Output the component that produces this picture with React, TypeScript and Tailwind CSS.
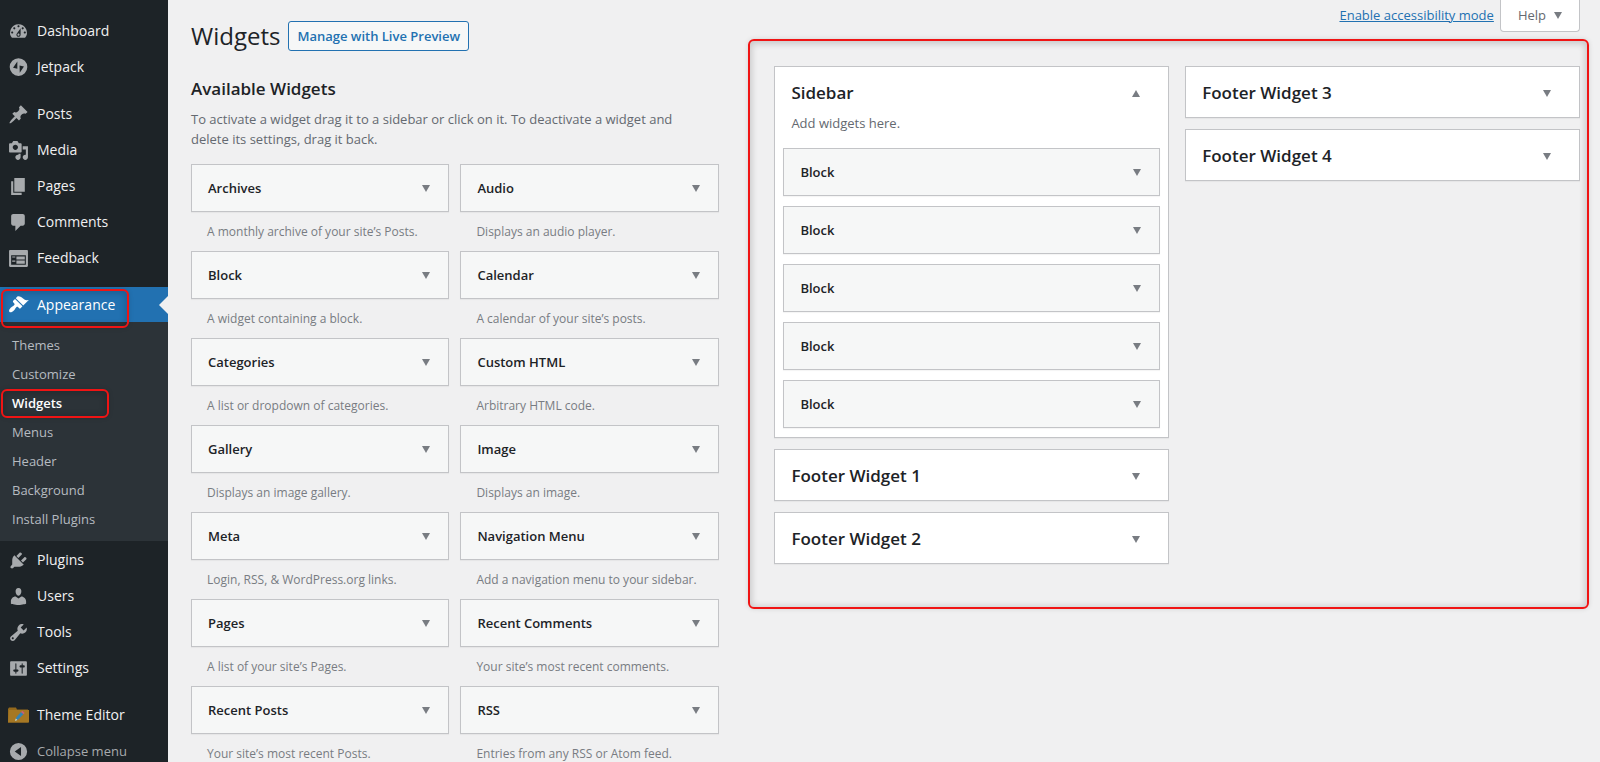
import { useState } from 'react';
import clsx from 'clsx';

interface MenuItem {
    label: string;
    icon: keyof typeof icons;
}

interface Widget {
    title: string;
    description: string;
}

const icons = {
    dashboard: 'M3.76 16h12.48A7.998 7.998 0 0 0 10 3a7.998 7.998 0 0 0-6.24 13zM10 4c.55 0 1 .45 1 1s-.45 1-1 1-1-.45-1-1 .45-1 1-1zM6 6c.55 0 1 .45 1 1s-.45 1-1 1-1-.45-1-1 .45-1 1-1zm8 0c.55 0 1 .45 1 1s-.45 1-1 1-1-.45-1-1 .45-1 1-1zm-5.37 5.55L12 7v6c0 1.1-.9 2-2 2s-2-.9-2-2c0-.57.24-1.08.63-1.45zM4 10c.55 0 1 .45 1 1s-.45 1-1 1-1-.45-1-1 .45-1 1-1zm12 0c.55 0 1 .45 1 1s-.45 1-1 1-1-.45-1-1 .45-1 1-1zm-5 3c0-.55-.45-1-1-1s-1 .45-1 1 .45 1 1 1 1-.45 1-1z',
    jetpack: 'M10 1.2a8.4 8.4 0 1 0 0 16.8 8.4 8.4 0 0 0 0-16.8zM8.9 4.400v6.900L4.800 10.200zM11 8l4.200 1.100L11.200 15z',
    post: 'M10.44 3.02l1.82-1.82 6.36 6.35-1.83 1.82c-1.05-.68-2.48-.57-3.41.36l-.75.75c-.92.93-1.04 2.35-.35 3.41l-1.83 1.82-2.41-2.41-2.8 2.79c-.42.42-3.38 2.71-3.8 2.29s1.86-3.39 2.28-3.81l2.79-2.79L4.1 9.36l1.83-1.82c1.05.69 2.48.57 3.4-.36l.75-.75c.93-.92 1.05-2.35.36-3.41z',
    media: 'M13 11V4c0-.55-.45-1-1-1h-1.67L9 1H5L3.67 3H2c-.55 0-1 .45-1 1v7c0 .55.45 1 1 1h10c.55 0 1-.45 1-1zM7 4.5c1.38 0 2.5 1.12 2.5 2.5S8.38 9.5 7 9.5 4.5 8.38 4.5 7 5.62 4.5 7 4.5zM14 6h5v10.5c0 1.38-1.12 2.5-2.5 2.5S14 17.88 14 16.5s1.12-2.5 2.5-2.5c.17 0 .34.02.5.05V9h-3V6zm-4 8.05V13h2v3.5c0 1.38-1.12 2.5-2.5 2.5S7 17.88 7 16.5 8.12 14 9.5 14c.17 0 .34.02.5.05z',
    page: 'M6 15V2h10v13H6zm-1 1h8v2H3V5h2v11z',
    comments: 'M5 2h9c1.1 0 2 .9 2 2v7c0 1.1-.9 2-2 2h-2l-5 5v-5H5c-1.1 0-2-.9-2-2V4c0-1.1.9-2 2-2z',
    feedback: 'M2 2h16c.55 0 1 .45 1 1v14c0 .55-.45 1-1 1H2c-.55 0-1-.45-1-1V3c0-.55.45-1 1-1zm15 14V7H3v9h14zM4 8v1h3V8H4zm4 0v3h8V8H8zm-4 4v1h3v-1H4zm4 0v3h8v-3H8z',
    appearance: 'M14.48 11.06L7.41 3.99l1.5-1.5c.5-.56 2.3-.47 3.51.32 1.21.8 1.43 1.28 2.91 2.1 1.18.64 2.45 1.26 4.45.85zm-.71.71L6.7 4.7 4.93 6.47c-.39.39-.39 1.02 0 1.41l1.06 1.06c.39.39.39 1.03 0 1.42-.6.6-1.43 1.11-2.21 1.69-.35.26-.7.53-1.01.84C1.43 14.23.4 16.08 1.4 17.07c.99 1 2.84-.03 4.18-1.36.31-.31.58-.66.85-1.02.57-.78 1.08-1.61 1.69-2.21.39-.39 1.02-.39 1.41 0l1.06 1.06c.39.39 1.02.39 1.41 0z',
    plugins: 'M13.11 4.36L9.87 7.6 8 5.73l3.24-3.24c.35-.34 1.05-.2 1.56.32.52.51.66 1.21.31 1.55zm-8 1.77l.91-1.12 9.01 9.01-1.19.84c-.71.71-2.63 1.16-3.82 1.16H6.14L4.9 17.26c-.59.59-1.54.59-2.12 0-.59-.58-.59-1.53 0-2.12l1.24-1.24v-3.88c0-1.13.4-3.19 1.09-3.89zm7.26 3.97l3.24-3.24c.34-.35 1.04-.21 1.55.31.52.51.66 1.21.31 1.55l-3.24 3.25z',
    users: 'M10 9.25c-2.27 0-2.73-3.44-2.73-3.44C7 4.02 7.82 2 9.97 2c2.16 0 2.98 2.02 2.71 3.81 0 0-.41 3.44-2.68 3.44zm0 2.57L12.72 10c2.39 0 4.52 2.33 4.52 4.53v2.49s-3.65 1.13-7.24 1.13c-3.65 0-7.24-1.13-7.24-1.13v-2.49c0-2.25 1.94-4.48 4.47-4.48z',
    tools: 'M16.68 9.77c-1.34 1.34-3.3 1.67-4.95.99l-5.41 6.52c-.99.99-2.59.99-3.58 0s-.99-2.59 0-3.57l6.52-5.42c-.68-1.65-.35-3.61.99-4.95 1.28-1.28 3.12-1.62 4.72-1.06l-2.89 2.89 2.82 2.82 2.86-2.87c.53 1.58.18 3.39-1.08 4.65zM3.81 16.21c.4.39 1.04.39 1.43 0 .4-.4.4-1.04 0-1.43-.39-.4-1.03-.4-1.43 0-.39.39-.39 1.03 0 1.43z',
    settings: 'M18 16V4c0-.55-.45-1-1-1H3c-.55 0-1 .45-1 1v12c0 .55.45 1 1 1h14c.55 0 1-.45 1-1zM8 11h1c.55 0 1 .45 1 1s-.45 1-1 1H8v1.5c0 .28-.22.5-.5.5s-.5-.22-.5-.5V13H6c-.55 0-1-.45-1-1s.45-1 1-1h1V5.5c0-.28.22-.5.5-.5s.5.22.5.5V11zm5-2h-1c-.55 0-1-.45-1-1s.45-1 1-1h1V5.5c0-.28.22-.5.5-.5s.5.22.5.5V7h1c.55 0 1 .45 1 1s-.45 1-1 1h-1v5.5c0 .28-.22.5-.5.5s-.5-.22-.5-.5V9z',
    collapse: 'M10 1.8a8.2 8.2 0 1 0 0 16.4 8.2 8.2 0 0 0 0-16.4zM12.4 5.8v8.4L6.4 10z',
};

const topItems: MenuItem[] = [
    { label: 'Dashboard', icon: 'dashboard' },
    { label: 'Jetpack', icon: 'jetpack' },
];

const contentItems: MenuItem[] = [
    { label: 'Posts', icon: 'post' },
    { label: 'Media', icon: 'media' },
    { label: 'Pages', icon: 'page' },
    { label: 'Comments', icon: 'comments' },
    { label: 'Feedback', icon: 'feedback' },
];

const adminItems: MenuItem[] = [
    { label: 'Plugins', icon: 'plugins' },
    { label: 'Users', icon: 'users' },
    { label: 'Tools', icon: 'tools' },
    { label: 'Settings', icon: 'settings' },
];

const submenu = ['Themes', 'Customize', 'Widgets', 'Menus', 'Header', 'Background', 'Install Plugins'];

const widgets: Widget[] = [
    { title: 'Archives', description: 'A monthly archive of your site’s Posts.' },
    { title: 'Audio', description: 'Displays an audio player.' },
    { title: 'Block', description: 'A widget containing a block.' },
    { title: 'Calendar', description: 'A calendar of your site’s posts.' },
    { title: 'Categories', description: 'A list or dropdown of categories.' },
    { title: 'Custom HTML', description: 'Arbitrary HTML code.' },
    { title: 'Gallery', description: 'Displays an image gallery.' },
    { title: 'Image', description: 'Displays an image.' },
    { title: 'Meta', description: 'Login, RSS, & WordPress.org links.' },
    { title: 'Navigation Menu', description: 'Add a navigation menu to your sidebar.' },
    { title: 'Pages', description: 'A list of your site’s Pages.' },
    { title: 'Recent Comments', description: 'Your site’s most recent comments.' },
    { title: 'Recent Posts', description: 'Your site’s most recent Posts.' },
    { title: 'RSS', description: 'Entries from any RSS or Atom feed.' },
];

const Icon = ({ name }: { name: keyof typeof icons }) => (
    <svg viewBox="0 0 20 20" className="size-[21px] shrink-0" fill="currentColor" fillRule="evenodd" aria-hidden="true">
        <path d={icons[name]} />
    </svg>
);

const FolderIcon = () => (
    <svg viewBox="0 0 21 21" className="size-[21px] shrink-0" aria-hidden="true">
        <path d="M1 2.500h7l1 2h11v13H0V4z" fill="#94691c" />
        <path d="M1 5h20v12.500H0z" fill="#a67824" />
        <path d="M7 16l1.500-4 4.500-5 2.500 2.300-5 5z" fill="#3583b5" />
        <path d="M13 7l1.300-1.300 2.400 2.200-1.200 1.400z" fill="#c95f78" />
        <path d="M7 16l.8-2.400 1.600 1.500z" fill="#e8d9b5" />
    </svg>
);

const Arrow = ({ up }: { up?: boolean }) => (
    <svg viewBox="0 0 8 7" className={clsx('w-2 h-[7px] shrink-0', up && 'rotate-180')} fill="#787c82" aria-hidden="true">
        <path d="M0 0h8L4 7z" />
    </svg>
);

const MenuLink = ({ item }: { item: MenuItem }) => (
    <li>
        <a href="#" className="flex h-9 items-center gap-2 px-2 pt-0.5 text-[#f0f0f1] hover:text-[#72aee6]">
            <span className="text-[#a7aaad]"><Icon name={item.icon} /></span>
            {item.label}
        </a>
    </li>
);

// One draggable widget bar
const WidgetBar = ({ title }: { title: string }) => (
    <button className="flex h-12 w-full items-center justify-between border border-[#c3c4c7] bg-[#f6f7f7] pl-4 pr-[18px] text-left text-[13px] font-semibold text-[#1d2327] shadow-[0_1px_1px_rgba(0,0,0,0.04)]">
        <span className="pt-0.5">{title}</span>
        <Arrow />
    </button>
);

const AreaPanel = ({ title, description, blocks = [] }: { title: string; description?: string; blocks?: string[] }) => {
    const [open, setOpen] = useState(blocks.length > 0);

    return (
        <section className="border border-[#c3c4c7] bg-white shadow-[0_1px_1px_rgba(0,0,0,0.04)]">
            <h2>
                <button
                    className="flex h-[50px] w-full items-center justify-between pl-4 pr-7 pt-0.5 text-left text-[17px] font-semibold text-[#1d2327]"
                    onClick={() => setOpen(!open)}
                    aria-expanded={open}
                >
                    {title}
                    <Arrow up={open} />
                </button>
            </h2>
            {open && (
                <div className="px-2 pb-[9px]">
                    <p className="-mt-0.5 mb-[17px] px-2 text-[13px] leading-4 text-[#646970]">{description}</p>
                    <div className="flex flex-col gap-[10px]">
                        {blocks.map((block, i) => (
                            <WidgetBar key={i} title={block} />
                        ))}
                    </div>
                </div>
            )}
        </section>
    );
};

const Marker = ({ className }: { className: string }) => (
    <span
        className={clsx(
            'pointer-events-none absolute rounded-md border-2 border-[#f01414] shadow-[inset_0_1px_6px_2px_rgba(0,0,0,0.16),0_0_5px_rgba(0,0,0,0.12)]',
            className
        )}
    />
);

const AdminMenu = () => (
    <nav className="w-[168px] shrink-0 bg-[#1d2327] pt-3 text-sm">
        <ul>
            {topItems.map((item) => <MenuLink key={item.label} item={item} />)}
        </ul>
        <ul className="mt-[11px]">
            {contentItems.map((item) => <MenuLink key={item.label} item={item} />)}
        </ul>
        <div className="relative mt-3">
            <a href="#" className="relative flex h-[35px] items-center gap-2 bg-[#2271b1] px-2 text-white">
                <Icon name="appearance" />
                Appearance
                <span className="absolute right-0 top-[9px] border-y-[9px] border-r-[9px] border-y-transparent border-r-[#f0f0f1]" />
            </a>
            <Marker className="left-px top-[2px] h-[39px] w-32" />
        </div>
        <ul className="bg-[#2c3338] py-2 text-[13px]">
            {submenu.map((label) => (
                <li key={label} className="relative">
                    <a
                        href="#"
                        className={clsx('flex h-[29px] items-center px-3 pt-0.5', label === 'Widgets' ? 'font-semibold text-white' : 'text-[#b6bbc0]')}
                    >
                        {label}
                    </a>
                    {label === 'Widgets' && <Marker className="left-px top-px h-[29px] w-[108px]" />}
                </li>
            ))}
        </ul>
        <ul>
            {adminItems.map((item) => <MenuLink key={item.label} item={item} />)}
        </ul>
        <ul className="mt-[11px]">
            <li>
                <a href="#" className="flex h-9 items-center gap-2 px-2 pt-0.5 text-[#f0f0f1]">
                    <FolderIcon />
                    Theme Editor
                </a>
            </li>
        </ul>
        <button className="flex h-9 w-full items-center gap-2 px-2 pt-0.5 text-[13px] text-[#a7aaad]">
            <Icon name="collapse" />
            Collapse menu
        </button>
    </nav>
);

export default function App() {
    return (
        <div className="flex min-h-screen bg-[#f0f0f1] font-['Open_Sans','Noto_Sans',sans-serif] text-[#3c434a]">
            <AdminMenu />
            <main className="min-w-0 flex-1 pl-[23px] pr-5">
                <header className="flex items-start justify-between">
                    <div className="flex items-center gap-2 pt-[21px]">
                        <h1 className="text-2xl leading-[30px] text-[#1d2327]">Widgets</h1>
                        <a href="#" className="flex h-[30px] items-center rounded-[3px] border border-[#2271b1] bg-[#f6f7f7] px-2 pt-0.5 text-[13px] font-semibold text-[#2271b1]">
                            Manage with Live Preview
                        </a>
                    </div>
                    <div className="flex items-start gap-[6px]">
                        <a href="#" className="text-[13px] leading-[30px] text-[#2271b1] underline">
                            Enable accessibility mode
                        </a>
                        <button className="flex h-8 items-center gap-2 rounded-b border border-t-0 border-[#c3c4c7] bg-white px-[17px] text-[13px] text-[#646970]">
                            Help
                            <Arrow />
                        </button>
                    </div>
                </header>

                <div className="mt-[15px] flex items-start justify-between">
                    <div className="w-[38%] pt-[11px]">
                        <h2 className="text-[17px] leading-6 font-semibold text-[#1d2327]">Available Widgets</h2>
                        <p className="mt-2 pr-9 text-[13px] leading-5 text-[#646970]">
                            To activate a widget drag it to a sidebar or click on it. To deactivate a widget and delete its settings, drag it back.
                        </p>
                        <div className="mt-[15px] grid grid-cols-2 gap-x-[11px] gap-y-[9px]">
                            {widgets.map((widget) => (
                                <div key={widget.title}>
                                    <WidgetBar title={widget.title} />
                                    <p className="mt-[10px] truncate pl-4 text-xs leading-5 text-[#787c82]">{widget.description}</p>
                                </div>
                            ))}
                        </div>
                    </div>

                    <div className="relative grid w-[58%] grid-cols-2 items-start gap-4">
                        <div className="flex flex-col gap-[11px]">
                            <AreaPanel title="Sidebar" description="Add widgets here." blocks={['Block', 'Block', 'Block', 'Block', 'Block']} />
                            <AreaPanel title="Footer Widget 1" />
                            <AreaPanel title="Footer Widget 2" />
                        </div>
                        <div className="flex flex-col gap-[11px]">
                            <AreaPanel title="Footer Widget 3" />
                            <AreaPanel title="Footer Widget 4" />
                        </div>
                        <Marker className="-bottom-[45px] -left-[26px] -right-[9px] -top-[27px]" />
                    </div>
                </div>
            </main>
        </div>
    );
}
